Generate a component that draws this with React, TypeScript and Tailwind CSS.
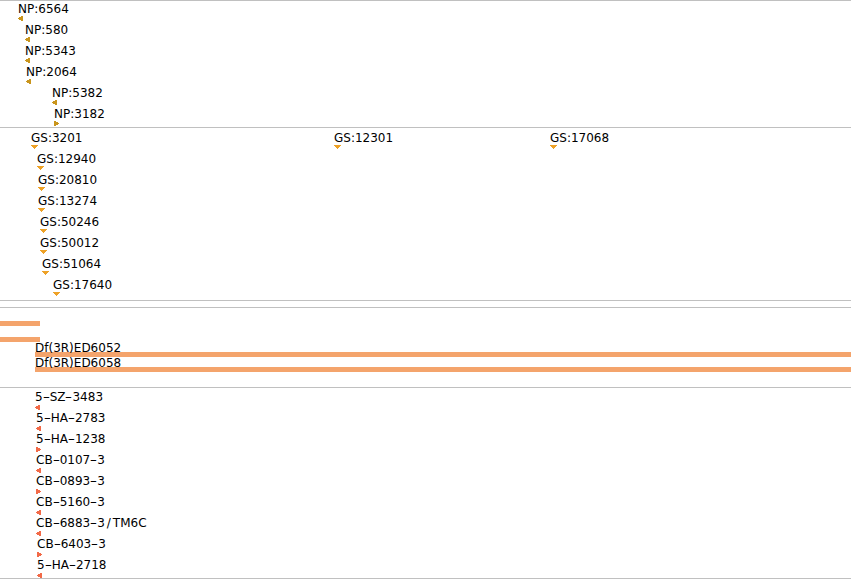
import React from "react";

type Dir = "left" | "right" | "down";
type Feat = { label: string; x: number; dir: Dir };

const Tri = ({ dir, color }: { dir: Dir; color: string }) => {
  if (dir === "down")
    return (
      <svg width="7" height="4" className="block" shapeRendering="crispEdges">
        <path d="M0 0h7v1H0zM1 1h5v1H1zM2 2h3v1H2zM3 3h1v1H3z" fill={color} />
      </svg>
    );
  if (dir === "left")
    return (
      <svg width="5" height="5" className="block" shapeRendering="crispEdges">
        <path d="M3 0h2v1H3zM1 1h4v1H1zM0 2h5v1H0zM1 3h4v1H1zM3 4h2v1H3z" fill={color} />
      </svg>
    );
  return (
    <svg width="5" height="5" className="block" shapeRendering="crispEdges">
      <path d="M0 0h2v1H0zM0 1h4v1H0zM0 2h5v1H0zM0 3h4v1H0zM0 4h2v1H0z" fill={color} />
    </svg>
  );
};

const Label = ({ text }: { text: string }) => {
  const tokens = text.split(/([-/])/);
  return (
    <>
      {tokens.map((t, i) =>
        t === "-" ? (
          <span key={i} className="inline-block w-[7px] text-center scale-x-[1.7]">
            -
          </span>
        ) : t === "/" ? (
          <span key={i} className="inline-block px-[2px]">
            /
          </span>
        ) : (
          <React.Fragment key={i}>{t}</React.Fragment>
        )
      )}
    </>
  );
};

const Row = ({ feats, color, shift }: { feats: Feat[]; color: string; shift: boolean }) => (
  <div className="relative h-[21px]">
    {feats.map((f) => (
      <div key={f.label} className="absolute top-0" style={{ left: f.x }}>
        <div
          className={
            shift
              ? "pt-[1px] h-[15px] leading-[14px] whitespace-nowrap"
              : "h-[15px] leading-[14px] whitespace-nowrap"
          }
        >
          <Label text={f.label} />
        </div>
        <Tri dir={f.dir} color={color} />
      </div>
    ))}
  </div>
);

const np: Feat[][] = [
  [{ label: "NP:6564", x: 18, dir: "left" }],
  [{ label: "NP:580", x: 25, dir: "left" }],
  [{ label: "NP:5343", x: 25, dir: "left" }],
  [{ label: "NP:2064", x: 26, dir: "left" }],
  [{ label: "NP:5382", x: 52, dir: "left" }],
  [{ label: "NP:3182", x: 54, dir: "right" }],
];

const gs: Feat[][] = [
  [
    { label: "GS:3201", x: 31, dir: "down" },
    { label: "GS:12301", x: 334, dir: "down" },
    { label: "GS:17068", x: 550, dir: "down" },
  ],
  [{ label: "GS:12940", x: 37, dir: "down" }],
  [{ label: "GS:20810", x: 38, dir: "down" }],
  [{ label: "GS:13274", x: 38, dir: "down" }],
  [{ label: "GS:50246", x: 40, dir: "down" }],
  [{ label: "GS:50012", x: 40, dir: "down" }],
  [{ label: "GS:51064", x: 42, dir: "down" }],
  [{ label: "GS:17640", x: 53, dir: "down" }],
];

const stocks: Feat[][] = [
  [{ label: "5-SZ-3483", x: 35, dir: "left" }],
  [{ label: "5-HA-2783", x: 36, dir: "left" }],
  [{ label: "5-HA-1238", x: 36, dir: "right" }],
  [{ label: "CB-0107-3", x: 36, dir: "left" }],
  [{ label: "CB-0893-3", x: 36, dir: "right" }],
  [{ label: "CB-5160-3", x: 36, dir: "left" }],
  [{ label: "CB-6883-3/TM6C", x: 36, dir: "left" }],
  [{ label: "CB-6403-3", x: 37, dir: "right" }],
  [{ label: "5-HA-2718", x: 37, dir: "left" }],
];

const dfs = [
  { label: "", x: 0, w: 40 },
  { label: "", x: 0, w: 40 },
  { label: "Df(3R)ED6052", x: 35, w: 816 },
  { label: "Df(3R)ED6058", x: 35, w: 816 },
];

export default function App() {
  return (
    <div
      className="w-[851px] h-[580px] overflow-hidden bg-white text-black text-[12px] leading-[14px] border-t border-[#c0c0c0]"
      style={{ fontFamily: '"DejaVu Sans", Verdana, sans-serif' }}
    >
      <div className="h-[127px] border-b border-[#c0c0c0]">
        {np.map((r, i) => (
          <Row key={i} feats={r} color="#c9951c" shift />
        ))}
      </div>
      <div className="h-[173px] pt-[2px] border-b border-[#c0c0c0]">
        {gs.map((r, i) => (
          <Row key={i} feats={r} color="#eea227" shift />
        ))}
      </div>
      <div className="h-[7px] border-b border-[#c0c0c0]" />
      <div className="h-[80px] pt-[2px] border-b border-[#c0c0c0]">
        {dfs.map((d, i) => (
          <div key={i} className="h-[16px] relative">
            <div className="h-[11px]">
              {d.label && (
                <div
                  className="-mt-[1px] leading-[14px] whitespace-nowrap"
                  style={{ marginLeft: d.x }}
                >
                  {d.label}
                </div>
              )}
            </div>
            <div className="h-[5px] bg-[#f4a46c]" style={{ marginLeft: d.x, width: d.w }} />
          </div>
        ))}
      </div>
      <div className="h-[191px] pt-[2px] border-b border-[#c0c0c0] overflow-hidden">
        {stocks.map((r, i) => (
          <Row key={i} feats={r} color="#f26a48" shift={false} />
        ))}
      </div>
    </div>
  );
}
